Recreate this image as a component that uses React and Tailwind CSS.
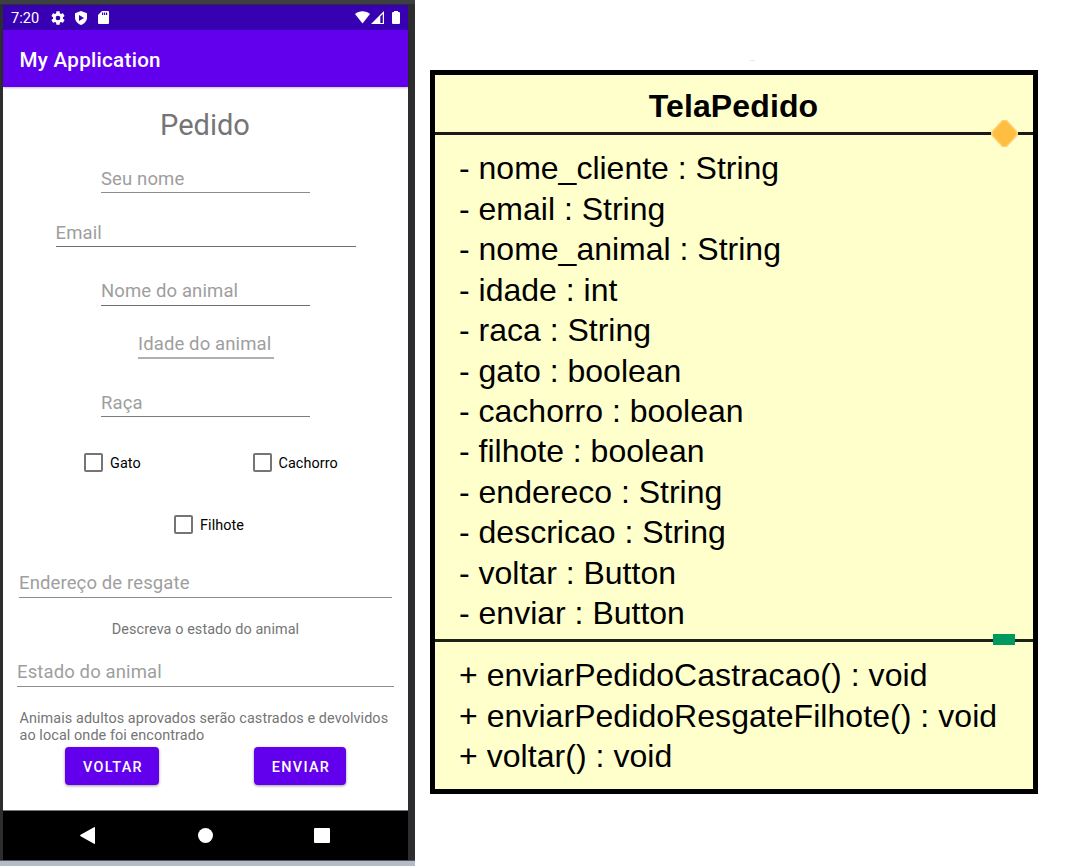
const attributes = [
  '- nome_cliente : String',
  '- email : String',
  '- nome_animal : String',
  '- idade : int',
  '- raca : String',
  '- gato : boolean',
  '- cachorro : boolean',
  '- filhote : boolean',
  '- endereco : String',
  '- descricao : String',
  '- voltar : Button',
  '- enviar : Button',
];

const methods = [
  '+ enviarPedidoCastracao() : void',
  '+ enviarPedidoResgateFilhote() : void',
  '+ voltar() : void',
];

function Field({ label, className }) {
  return (
    <div className={`h-[26px] border-b text-[18.5px] tracking-[0.12px] whitespace-nowrap text-[#9e9e9e] ${className}`}>
      {label}
    </div>
  );
}

function Check({ label, className }) {
  return (
    <div className={`flex h-[19px] items-center gap-[7px] text-[14.4px] text-black ${className}`}>
      <span className="size-[19px] shrink-0 rounded-[2px] border-2 border-[#757575]" />
      <span className="pt-[2px] leading-[20px] tracking-[0.09px]">{label}</span>
    </div>
  );
}

function StatusBar() {
  return (
    <div className="flex h-[25px] items-center bg-[#3700b3] pr-[8px] pl-[8px] text-white">
      <span className="w-[28px] pt-[2px] text-[14.6px] leading-[25px]">7:20</span>
      <svg className="ml-[11px] size-[16px]" viewBox="0 0 24 24" fill="currentColor">
        <path d="M19.43 12.98c.04-.32.07-.64.07-.98s-.03-.66-.07-.98l2.11-1.65c.19-.15.24-.42.12-.64l-2-3.46c-.12-.22-.39-.3-.61-.22l-2.49 1c-.52-.4-1.08-.73-1.69-.98l-.38-2.65A.49.49 0 0 0 14 2h-4c-.25 0-.46.18-.49.42l-.38 2.65c-.61.25-1.17.59-1.69.98l-2.49-1c-.23-.09-.49 0-.61.22l-2 3.46c-.13.22-.07.49.12.64l2.11 1.65c-.04.32-.07.65-.07.98s.03.66.07.98l-2.11 1.65c-.19.15-.24.42-.12.64l2 3.46c.12.22.39.3.61.22l2.49-1c.52.4 1.08.73 1.69.98l.38 2.65c.03.24.24.42.49.42h4c.25 0 .46-.18.49-.42l.38-2.65c.61-.25 1.17-.59 1.69-.98l2.49 1c.23.09.49 0 .61-.22l2-3.46c.12-.22.07-.49-.12-.64zM12 15.5a3.5 3.5 0 1 1 0-7 3.500 3.500 0 0 1 0 7z" />
      </svg>
      <svg className="ml-[9px] h-[14px] w-[12px]" viewBox="0 0 12 14">
        <path d="M6 0 12 2.200V6.500C12 10 9.500 12.800 6 14 2.500 12.800 0 10 0 6.500V2.200z" fill="#fff" />
        <path d="M4 4v6l5-3z" fill="#3700b3" />
      </svg>
      <svg className="ml-[11px] h-[13px] w-[11px]" viewBox="0 0 11 13">
        <path d="M4 0h6a1 1 0 0 1 1 1v11a1 1 0 0 1-1 1H1a1 1 0 0 1-1-1V4z" fill="#fff" />
        <path d="M4 1.500h1.200v2.500H4zM6 1.500h1.200v2.500H6zM8 1.500h1.200v2.500H8z" fill="#3700b3" />
      </svg>
      <svg className="ml-auto h-[13px] w-[15px]" viewBox="0 0 15 13">
        <path d="M0 2.900C4-.8 11-.8 15 2.900L7.500 12.500z" fill="#fff" />
      </svg>
      <svg className="ml-px h-[13px] w-[13px]" viewBox="0 0 13 13">
        <path d="M0 13 13 0v13z" fill="#fff" />
        <path d="M9.300 5.500 11.800 3V12H9.300z" fill="#3700b3" />
      </svg>
      <svg className="ml-[8px] h-[13px] w-[8px]" viewBox="0 0 8 13">
        <path d="M2 0h4v1h1.200l.8.8V12.200l-.8.8H.8L0 12.200V1.800L.8 1H2z" fill="#fff" />
      </svg>
    </div>
  );
}

function Phone() {
  return (
    <div className="flex h-[866px] w-[415px] shrink-0 flex-col bg-[#2d2d2f] font-[Roboto,sans-serif]">
      <div className="h-[5px] border-b border-[#2f2f30] bg-[#3c3f41]" />
      <div className="mr-[7px] ml-[3px] flex h-[855px] flex-col bg-white">
        <StatusBar />
        <div className="h-[57px] bg-[#6200ee] pl-[16.500px] text-[20.600px] leading-[60px] font-medium tracking-[0.280px] text-white shadow-[0_1px_2px_rgba(0,0,0,0.25)]">
          My Application
        </div>
        <div className="flex h-[723px] flex-col">
          <div className="mt-[20px] h-[35px] pr-px text-center text-[29px] leading-[36px] text-[#757575]">Pedido</div>
          <Field label="Seu nome" className="mt-[25px] ml-[98px] w-[209px] border-[#8c8c8c] leading-[24px]" />
          <Field label="Email" className="mt-[28px] ml-[52.500px] w-[300px] border-[#6f6f6f] leading-[24px]" />
          <Field label="Nome do animal" className="mt-[33px] ml-[98px] w-[209px] border-[#6f6f6f] leading-[23px]" />
          <Field label="Idade do animal" className="mt-[27px] ml-[135px] w-[136px] border-b-2 border-[#b0b0b0] leading-[22px]" />
          <Field label="Raça" className="mt-[32px] ml-[98px] w-[209px] border-[#7c7c7c] leading-[24px]" />
          <div className="mt-[36px] flex">
            <Check label="Gato" className="ml-[81px] w-[168.500px]" />
            <Check label="Cachorro" className="" />
          </div>
          <Check label="Filhote" className="mt-[43px] ml-[171px]" />
          <Field label="Endereço de resgate" className="mt-[38px] ml-[16px] w-[373px] border-[#8c8c8c] leading-[22px]" />
          <div className="mt-[22px] text-center text-[14.400px] leading-[20px] tracking-[0.090px] text-[#757575]">Descreva o estado do animal</div>
          <Field label="Estado do animal" className="mt-[21px] ml-[14px] w-[377px] border-[#8f8f8f] leading-[22px]" />
          <div className="mt-[23px] ml-[16.500px] text-[14.400px] leading-[17px] tracking-[0.090px] whitespace-nowrap text-[#757575]">
            Animais adultos aprovados serão castrados e devolvidos
            <br />
            ao local onde foi encontrado
          </div>
          <div className="mt-[3px] flex text-[14.400px] font-medium tracking-[1.350px] text-white">
            <button className="ml-[62px] h-[38px] w-[94px] rounded-[4px] bg-[#6200ee] pt-[3px] pl-[2px] shadow-[0_1px_3px_rgba(0,0,0,0.4)]">VOLTAR</button>
            <button className="ml-[95px] h-[38px] w-[92px] rounded-[4px] bg-[#6200ee] pt-[3px] pl-[2px] shadow-[0_1px_3px_rgba(0,0,0,0.4)]">ENVIAR</button>
          </div>
        </div>
        <div className="flex h-[50px] items-center border-t border-[#777] bg-black">
          <svg className="ml-[77px] h-[17px] w-[15px]" viewBox="0 0 15 17">
            <path d="M.6 7.800 14 .2q1-.4 1 .6v15.400q0 1-1 .6L.6 9.200q-1-.7 0-1.400z" fill="#fff" />
          </svg>
          <div className="ml-[103px] size-[15px] rounded-full bg-white" />
          <div className="ml-[101px] h-[15px] w-[16px] rounded-[1px] bg-white" />
        </div>
      </div>
      <div className="h-[6px] border-t border-[#55585c] bg-[#b5bcc7]" />
    </div>
  );
}

function ClassDiagram() {
  return (
    <div className="relative mt-[70px] ml-[15px] h-[724px] w-[608px] border-5 border-black bg-[#ffffcc] font-['Liberation_Sans',Arial,sans-serif] text-[32px] text-black">
      <h1 className="h-[57px] pr-px text-center text-[32px] leading-[62px] font-bold tracking-[0.120px]">TelaPedido</h1>
      <div className="h-[507px] border-t-3 border-[#1c1a18] pt-[13.400px] pl-[24px]">
        {attributes.map((a) => (
          <div key={a} className="h-[40.430px] leading-[40.400px] whitespace-nowrap">{a}</div>
        ))}
      </div>
      <div className="h-[150px] border-t-3 border-[#1c2418] pt-[13.400px] pl-[24px]">
        {methods.map((m) => (
          <div key={m} className="h-[40.430px] leading-[40.400px] tracking-[0.050px] whitespace-nowrap">{m}</div>
        ))}
      </div>
      <svg className="absolute top-[45px] left-[556px] h-[27px] w-[27px]" viewBox="0 0 27 27">
        <path d="M11 0h5L27 12v3L16 27h-5L0 15v-3z" fill="#ffd070" />
        <path d="M12 1h3L25 12v3L15 26h-3L2 15v-3z" fill="#ffbe40" />
      </svg>
      <div className="absolute top-[559px] left-[558px] h-[11px] w-[22px] bg-[#009960]" />
    </div>
  );
}

export default function App() {
  return (
    <div className="flex h-[866px] w-[1070px] items-start overflow-hidden bg-white">
      <Phone />
      <ClassDiagram />
      <div className="-ml-[288px] mt-[60px] h-px w-[5px] bg-[#e8e8e8]" />
    </div>
  );
}
